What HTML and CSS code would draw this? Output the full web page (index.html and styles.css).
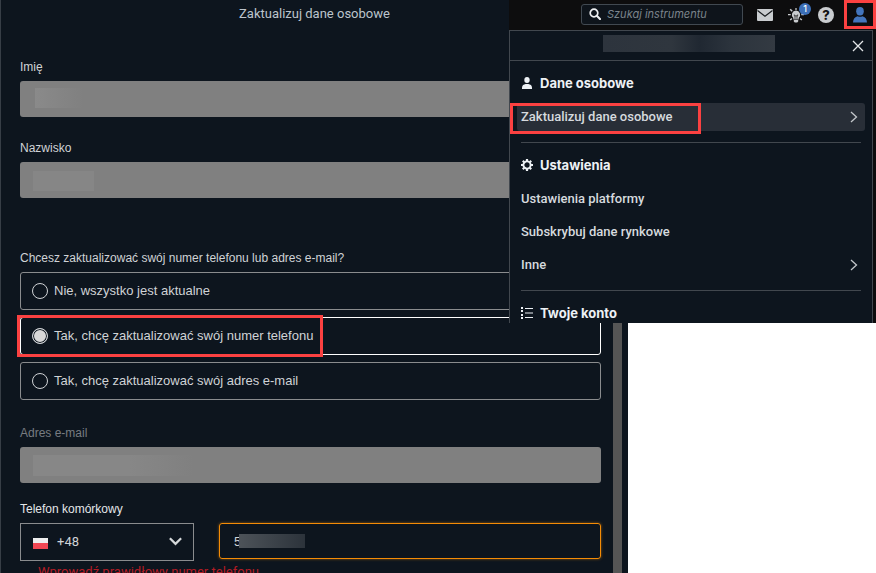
FILE: index.html
```html
<!DOCTYPE html>
<html lang="pl">
<head>
<meta charset="utf-8">
<meta name="viewport" content="width=device-width, initial-scale=1">
<title>Zaktualizuj dane osobowe</title>
<link rel="stylesheet" href="styles.css">
</head>
<body>
<div class="page">
  <main class="panel">
    <h1 class="panel-title">Zaktualizuj dane osobowe</h1>
    <div class="panel-body">
      <form class="form">
        <div class="field">
          <label for="first-name">Imię</label>
          <div class="control"><input class="locked" id="first-name" type="text" disabled><span class="mask mask-first"></span></div>
        </div>
        <div class="field">
          <label for="last-name">Nazwisko</label>
          <div class="control"><input class="locked" id="last-name" type="text" disabled><span class="mask mask-last"></span></div>
        </div>
        <fieldset class="choices">
          <legend>Chcesz zaktualizować swój numer telefonu lub adres e-mail?</legend>
          <label class="choice"><input type="radio" name="update">Nie, wszystko jest aktualne</label>
          <label class="choice selected"><input type="radio" name="update" checked>Tak, chcę zaktualizować swój numer telefonu<span class="mark mark-choice"></span></label>
          <label class="choice"><input type="radio" name="update">Tak, chcę zaktualizować swój adres e-mail</label>
        </fieldset>
        <div class="field email">
          <label class="muted" for="email">Adres e-mail</label>
          <div class="control"><input class="locked" id="email" type="email" disabled><span class="mask mask-email"></span></div>
        </div>
        <div class="field phone">
          <label class="strong" for="phone">Telefon komórkowy</label>
          <div class="phone-row">
            <div class="control prefix">
              <select aria-label="Prefiks"><option>+48</option></select>
              <span class="flag"></span>
              <svg class="caret" viewBox="0 0 16 10"><path d="M2 2l6 6 6-6" fill="none" stroke="#d5d8da" stroke-width="2.4"/></svg>
            </div>
            <div class="control"><input class="number" id="phone" type="tel" value="5"><span class="mask mask-phone"></span></div>
          </div>
          <p class="error">Wprowadź prawidłowy numer telefonu</p>
        </div>
      </form>
      <div class="scrollbar"></div>
    </div>
  </main>
</div>

<aside class="account">
  <header class="toolbar">
    <div class="search">
      <svg viewBox="0 0 12 12"><circle cx="5" cy="5" r="3.8" fill="none" stroke="#eceef0" stroke-width="1.7"/><path d="M7.8 7.8L11 11" stroke="#eceef0" stroke-width="2.1" stroke-linecap="round"/></svg>
      <input type="search" placeholder="Szukaj instrumentu" aria-label="Szukaj instrumentu">
    </div>
    <button class="tool mail" type="button" aria-label="Wiadomości"><svg viewBox="0 0 16 12"><rect width="16" height="12" rx="1" fill="#c9cccf"/><path d="M.5 1.500L8 7.300l7.500-5.800" fill="none" stroke="#171a1d" stroke-width="1.200"/></svg></button>
    <button class="tool bulb" type="button" aria-label="Powiadomienia"><svg viewBox="0 0 18 16"><path d="M8 3.500a4.300 4.300 0 0 1 2.700 7.500v1.500H5.300V11A4.300 4.300 0 0 1 8 3.500z" fill="#c9cccf"/><path d="M5.800 13h4.400v1.400l-1 1H6.800l-1-1zM7.400 1h1.200v2H7.400zM0 7h2.700v1.300H0zM13.300 7H16v1.300h-2.700z" fill="#c9cccf"/><path d="M2.200 2.200l2 2M2.200 13l1.700-1.500M13.800 13l-1.700-1.500M13.500 2.500L12 4" stroke="#c9cccf" stroke-width="1.500"/><path d="M6.300 7.500v1.300h3.400V7.500M7 8.800v3.700M9 8.800v3.700" fill="none" stroke="#111" stroke-width=".7"/></svg><span class="badge">1</span></button>
    <button class="tool help" type="button" aria-label="Pomoc">?</button>
    <button class="tool user" type="button" aria-label="Konto"><svg viewBox="0 0 14 16"><ellipse cx="7" cy="4.300" rx="3.800" ry="4.200" fill="#4375bd"/><path d="M0 15.500c0-3.500 2-5.800 4.700-6.300 1.400.7 3.200.7 4.600 0 2.700.5 4.700 2.800 4.700 6.300z" fill="#4375bd"/></svg><span class="mark mark-user"></span></button>
  </header>
  <div class="menu">
    <div class="menu-head">
      <span class="account-name"></span>
      <button class="close" type="button" aria-label="Zamknij"><svg viewBox="0 0 12 12"><path d="M1 1l10 10M11 1L1 11" stroke="#e3e6e8" stroke-width="1.3"/></svg></button>
    </div>
    <nav class="menu-body">
      <section>
        <h2><svg viewBox="0 0 12 12"><ellipse cx="6" cy="3" rx="2.700" ry="3" fill="#edf1f5"/><path d="M1 12v-1.500C1 8.500 2.700 7.300 4.600 7h2.800C9.300 7.300 11 8.500 11 10.500V12z" fill="#edf1f5"/></svg>Dane osobowe</h2>
        <a class="current" href="#dane">Zaktualizuj dane osobowe<svg class="arrow" viewBox="0 0 8 12"><path d="M1 1l5.500 5L1 11" fill="none" stroke="#c3c7cb" stroke-width="1.3"/></svg><span class="mark mark-link"></span></a>
      </section>
      <section>
        <h2><svg viewBox="0 0 12 12"><circle cx="6" cy="6" r="3.600" fill="none" stroke="#edf1f5" stroke-width="1.900"/><path d="M6 0v2M6 10v2M0 6h2M10 6h2M1.800 1.800l1.400 1.400M8.800 8.800l1.400 1.400M10.200 1.800L8.800 3.200M3.200 8.800l-1.400 1.400" stroke="#edf1f5" stroke-width="2.200"/></svg>Ustawienia</h2>
        <a href="#platforma">Ustawienia platformy</a>
        <a href="#rynki">Subskrybuj dane rynkowe</a>
        <a href="#inne">Inne<svg class="arrow" viewBox="0 0 8 12"><path d="M1 1l5.500 5L1 11" fill="none" stroke="#c3c7cb" stroke-width="1.300"/></svg></a>
      </section>
      <section>
        <h2><svg viewBox="0 0 12 12"><path d="M0 0h2v2H0zM0 3h2v2H0zM0 7h2v2H0zM0 10h2v2H0zM4 1h8v1H4zM4 5.500h8v1H4zM4 10h8v1H4z" fill="#edf1f5"/></svg>Twoje konto</h2>
      </section>
    </nav>
  </div>
</aside>
</body>
</html>
```
FILE: styles.css
```css
* { box-sizing: border-box; }
html { height: 100%; }
body {
  margin: 0;
  height: 100%;
  overflow: hidden;
  position: relative;
  background: #fff;
  font-family: "Liberation Sans", Arial, sans-serif;
  font-size: 12px;
  line-height: 16px;
  color: #d0d3d6;
}
button, input, select { font: inherit; color: inherit; margin: 0; }
button { padding: 0; border: 0; background: none; }
svg { display: block; flex: none; }

.page {
  display: grid;
  grid-template-columns: minmax(0, 1fr) 248px;
  height: 100%;
}
.panel {
  display: flex;
  flex-direction: column;
  min-height: 0;
  background: #0d151e;
  border-left: 1px solid #373e46;
}
.panel-title {
  margin: 0;
  padding: 6px 0;
  font: 400 13px/16px Roboto, sans-serif;
  text-align: center;
  color: #bcc4cc;
}
.panel-body {
  flex: 1;
  display: flex;
  min-height: 0;
  padding: 0 6px 0 19px;
}
.form {
  flex: 1;
  min-width: 0;
  padding-top: 31px;
}
.scrollbar { width: 9px; margin-left: 12px; background: #555; }

.field { margin-bottom: 23px; }
.field label { display: block; margin-bottom: 6px; }
.control { position: relative; }
.locked {
  display: block;
  width: 100%;
  height: 36px;
  border: 0;
  border-radius: 3px;
  background: #808080;
}
.mask { position: absolute; }
.mask-first { left: 15px; top: 7px; width: 48px; height: 20px; background: linear-gradient(90deg, #8a8a8a, #808080); }
.mask-last { left: 13px; top: 9px; width: 61px; height: 20px; background: #868686; }
.mask-email { left: 13px; top: 8px; width: 160px; height: 21px; background: linear-gradient(90deg, #878787 60%, #808080); }

.choices {
  display: grid;
  gap: 7px;
  margin: 52px 0 25px;
  padding: 0;
  border: 0;
}
.choices legend { padding: 0; margin-bottom: 6px; }
.choice {
  position: relative;
  display: flex;
  align-items: center;
  gap: 6px;
  height: 38px;
  padding-left: 11px;
  border: 1px solid #8a8c8e;
  border-radius: 3px;
  font-size: 13px;
}
.choice.selected { border-color: #fff; }
.choice input {
  appearance: none;
  width: 16px;
  height: 16px;
  border: 1px solid #d0d3d6;
  border-radius: 50%;
}
.choice input:checked { background: #d8d8d8; box-shadow: inset 0 0 0 1px #0d151e; }

.field .muted { color: #777c81; }
.email { margin-bottom: 18px; }
.field .strong { color: #e4e7e9; }
.phone-row { display: grid; grid-template-columns: 174px minmax(0, 1fr); gap: 25px; }
.prefix select {
  display: block;
  appearance: none;
  width: 100%;
  height: 38px;
  padding: 0 36px;
  border: 1px solid #8a8c8e;
  border-radius: 0;
  background: transparent;
  font: 13px/16px Roboto, sans-serif;
}
.flag { position: absolute; left: 13px; top: 15px; width: 15px; height: 11px; background: linear-gradient(#eee 50%, #f14753 50%); }
.caret { position: absolute; right: 11px; top: 13px; width: 15px; height: 10px; }
.number {
  display: block;
  width: 100%;
  height: 36px;
  padding: 0 14px;
  border: 1px solid #f48c06;
  border-radius: 3px;
  background: transparent;
  box-shadow: 0 0 3px #f48c0690;
  font-size: 13px;
}
.mask-phone { left: 20px; top: 11px; width: 66px; height: 14px; background: linear-gradient(90deg, #4d5359, #2c333b); }
.error { margin: 3px 0 0 18px; font: 13px/16px Roboto, sans-serif; color: #b31b24; }

.mark { position: absolute; border: 3px solid #fb4141; pointer-events: none; }
.mark-choice { left: -4px; top: -3px; width: 306px; height: 42px; }
.mark-user { inset: 0; }
.mark-link { left: -7px; top: 0; width: 191px; height: 31px; }

.account {
  position: absolute;
  top: 0;
  right: 0;
  width: 367px;
  max-width: 100%;
  font: 500 13px/18px Roboto, sans-serif;
  color: #d6dade;
  background: #0d0d0e;
}
.toolbar { display: flex; align-items: center; height: 30px; padding-left: 72px; font-family: Inter, sans-serif; }
.search {
  flex: 1;
  display: flex;
  align-items: center;
  gap: 6px;
  height: 21px;
  margin-bottom: 2px;
  padding-left: 7px;
  border: 1px solid #414951;
  border-radius: 3px;
  background: #0e141b;
}
.search svg { width: 12px; height: 12px; }
.search input {
  min-width: 0;
  width: 100%;
  padding: 0;
  border: 0;
  background: none;
  font: italic 400 11px/16px Inter, sans-serif;
}
.search input::placeholder { color: #7c848c; }
.tool { position: relative; flex: none; }
.mail { margin-left: 14px; }
.mail svg { width: 16px; height: 12px; }
.bulb { margin-left: 15px; }
.bulb svg { width: 18px; height: 16px; }
.badge {
  position: absolute;
  left: 11px;
  top: -4px;
  width: 12px;
  height: 12px;
  border-radius: 50%;
  background: #3c6fb8;
  color: #fff;
  font-size: 9px;
  line-height: 12px;
}
.help {
  width: 16px;
  height: 16px;
  margin-left: 12px;
  border-radius: 50%;
  background: #c9cccf;
  color: #111;
  font-size: 13px;
  font-weight: 800;
  line-height: 16px;
}
.user { width: 32px; height: 29px; margin: 0 0 1px 10px; }
.user svg { width: 14px; height: 16px; margin: 0 auto; }

.menu {
  margin-right: 3px;
  height: 293px;
  overflow: hidden;
  border: 1px solid #41474e;
  border-bottom: 0;
  background: #0d151e;
}
.menu-head {
  display: flex;
  align-items: center;
  height: 30px;
  padding: 0 8px 0 93px;
  border-bottom: 1px solid #41474e;
}
.account-name {
  width: 172px;
  height: 17px;
  margin: -4px auto 0 0;
  background: linear-gradient(90deg, #2d343d, #2f363e 40%, #202832 56%, #2c343d 75%, #333a42);
}
.close svg { width: 12px; height: 12px; }
.menu-body section { margin: 0 11px; padding-bottom: 9px; }
.menu-body section + section { border-top: 1px solid #41474e; }
.menu h2 {
  display: flex;
  align-items: center;
  gap: 7px;
  height: 42px;
  margin: 0;
  padding-top: 2px;
  font: 700 13px/18px Inter, sans-serif;
  color: #edf1f5;
}
.menu h2 svg { width: 12px; height: 12px; }
.menu section + section h2 { margin-bottom: -3px; }
.menu a {
  position: relative;
  display: flex;
  align-items: center;
  justify-content: space-between;
  height: 33px;
  padding-right: 3px;
  color: inherit;
  text-decoration: none;
}
.menu a.current {
  height: 28px;
  margin: 0 -4px 2px;
  padding: 0 7px 0 4px;
  border-radius: 3px;
  background: #282e37;
}
.arrow { width: 8px; height: 12px; }
```
